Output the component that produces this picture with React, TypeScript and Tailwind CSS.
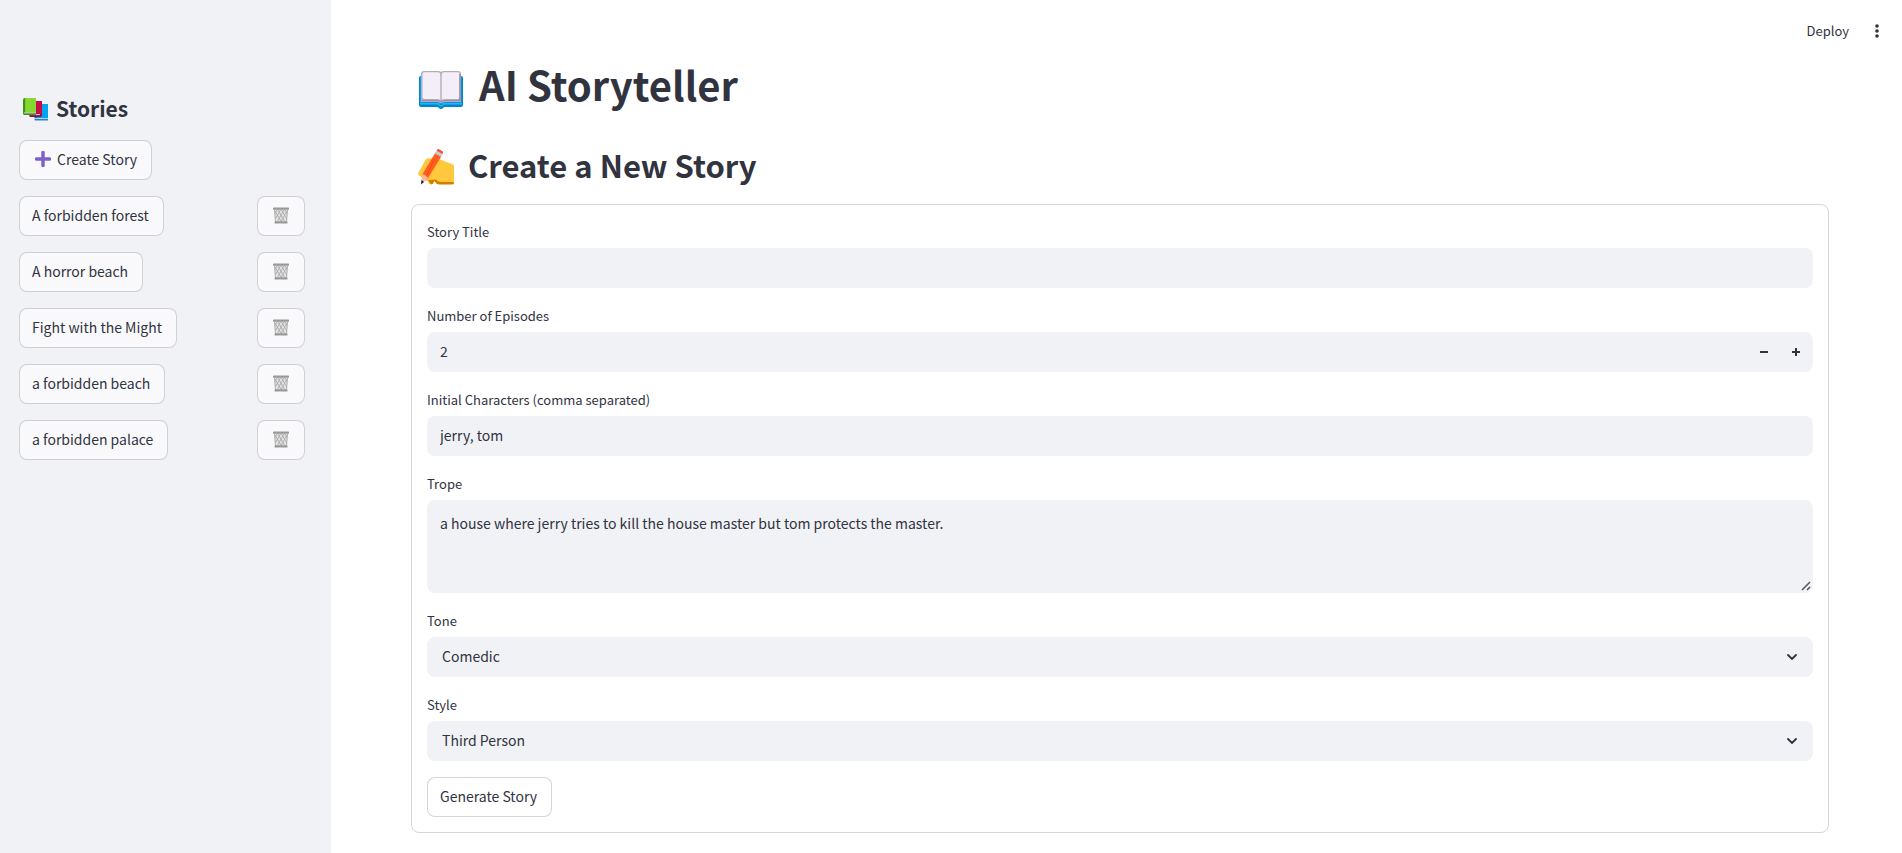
import { useState, type ReactNode } from "react";

const stories = [
  "A forbidden forest",
  "A horror beach",
  "Fight with the Might",
  "a forbidden beach",
  "a forbidden palace",
];

function StackedBooks() {
  return (
    <svg viewBox="0 0 25 23" className="h-[23px] w-[25px] shrink-0" aria-hidden="true">
      <path d="M11.500 20.500V7.500q0-1.500 1.500-1.500H25v15H13z" fill="#0074ba" />
      <path d="M14 6h11v14H14z" fill="#00a6ed" />
      <path d="M12 20h13v1.500H12.500z" fill="#b4d6ef" />
      <path d="M11.500 21h13.500v1.500H12.500q-1 0-1-1.500z" fill="#1b87cf" />
      <path d="M6 17V4.500Q6 3 7.500 3H19v15H7z" fill="#990838" />
      <path d="M8 3h11v13.500H8z" fill="#ca0b4a" />
      <path d="M6.500 16H17v1.300H6.500z" fill="#e2c3d0" />
      <path d="M6 17.500h12V19H7z" fill="#990838" />
      <path d="M0 15.500V2Q0 0 2 0H13v16.500H1z" fill="#44911b" />
      <path d="M2.200 0H13v14H2.200z" fill="#86d72f" />
      <path d="M1.200 14.300H13v1.300H1.200z" fill="#d6e8cb" />
      <path d="M0 15.500h13v1.400H1.500Q0 16.900 0 15.500z" fill="#44911b" />
    </svg>
  );
}

function OpenBook() {
  return (
    <svg viewBox="0 0 44 38" className="h-[38px] w-[44px] shrink-0" aria-hidden="true">
      <path d="M2 5h40q2 0 2 2v27q0 2-2 2H25q-1 2-3 2t-3-2H2q-2 0-2-2V7q0-2 2-2z" fill="#0084ce" />
      <path d="M1 5.500h2v26h38v-26h1.500V33H1z" fill="#00a6ed" />
      <path d="M1 32h18.500q1 2 2.500 2t2.500-2H43v1.500H25q-1 2-3 2t-3-2H1z" fill="#26b4f0" />
      <path d="M5 0h14q2 0 3 1 1-1 3-1h14q3 0 3 3v28H25q-1 1-3 1t-3-1H2V3q0-3 3-3z" fill="#b4acbc" />
      <path d="M5 1.300h14q2.300 0 2.300 2.200V29Q20 28 18 28H5.500Q3.500 28 3.500 26V3q0-1.700 1.500-1.700z" fill="#f3eef8" />
      <path d="M25 1.300h14q1.500 0 1.500 1.700v23q0 2-2 2H26q-2 0-3.300 1V3.500q0-2.200 2.300-2.200z" fill="#f3eef8" />
      <path d="M3 29.500h15.500q2 0 3.500 1.200 1.500-1.200 3.500-1.200H41" stroke="#998ea4" strokeWidth="1" fill="none" />
      <path d="M41 3v27" stroke="#998ea4" strokeWidth="1.500" />
    </svg>
  );
}

function WritingHand() {
  return (
    <svg viewBox="0 0 36 36" className="h-9 w-9 shrink-0" aria-hidden="true">
      <path d="M8 10Q10 9 13 9.500h7l15 6q1 .5 1 2V33q0 2-2 2H21q-2 0-3-1.500L16 31l-3 4h-2l-1-3-3-1L2 27q-2-1-2-2.500z" fill="#ffc83d" />
      <path d="M10 31l3 4.500q2 0 3.500-3.500l2 2.500q1 1 3 1h13q1.500 0 1.500-2.500H23q-3 0-5-2.500z" fill="#d67d00" />
      <path d="M4.500 25L17.500 3.500 23.500 7 9.500 30 5 33z" fill="#ff5d22" />
      <path d="M16 10L8 29" stroke="#f04c12" strokeWidth="1" />
      <path d="M18.300 2.200l1.200-2q.6-.5 1.500 0l3.500 2q1 .6.500 1.500l-1 2z" fill="#f8503a" />
      <path d="M18.700 1.800l5.800 3.200-1.700 2.800L17 4.600z" fill="#c5cad2" />
      <path d="M4.500 25q3 .5 5.500 4l-5.500 5-1.500 1z" fill="#ffb49a" />
      <path d="M3.500 31l2.500 2-3 2.500z" fill="#212121" />
    </svg>
  );
}

function PlusMark() {
  return (
    <svg viewBox="0 0 16 16" className="h-4 w-4 shrink-0" aria-hidden="true">
      <path d="M8 1.500v13M1.500 8h13" stroke="#7d5fcb" strokeWidth="3.400" strokeLinecap="round" />
    </svg>
  );
}

function Wastebasket() {
  return (
    <svg viewBox="0 0 16 17" className="h-[17px] w-4" aria-hidden="true">
      <path d="M1 2h14l-1 13.500H2z" fill="#e2e2e2" />
      <path
        d="M1.500 3l1 11.500M14.500 3l-1 11.500M2 4l6 10.500M5 3l6.500 11.500M8.500 3l5 8.500M12 3l2 3.500M14 4L8 14.500M11 3L4.500 14.500M7.500 3l-5 8.500M4 3L2 6.500"
        stroke="#acacac"
        strokeWidth=".9"
      />
      <rect x="0" y="0.500" width="16" height="2.300" rx=".6" fill="#999999" />
      <rect x="1.500" y="14.200" width="13" height="2.300" rx=".6" fill="#999999" />
    </svg>
  );
}

function Chevron() {
  return (
    <svg viewBox="0 0 10 6" className="pointer-events-none absolute top-[17px] right-4 h-1.5 w-2.5" aria-hidden="true">
      <path d="M1 1l4 4 4-4" fill="none" stroke="#31333f" strokeWidth="1.800" strokeLinecap="round" />
    </svg>
  );
}

const control = "block w-full rounded-lg bg-[#f0f2f6] text-[14px] outline-none";
const button = "flex h-10 items-center rounded-lg border border-[#31333f]/20 pb-0.5 text-[14px]";

function Field({ id, label, children }: { id: string; label: string; children: ReactNode }) {
  return (
    <div>
      <label htmlFor={id} className="mb-1 block text-[13px] leading-6">
        {label}
      </label>
      {children}
    </div>
  );
}

function SelectField({ id, label, options }: { id: string; label: string; options: string[] }) {
  return (
    <Field id={id} label={label}>
      <div className="relative">
        <select id={id} className={`${control} h-10 appearance-none pr-10 pb-0.5 pl-[15px]`}>
          {options.map((option) => (
            <option key={option}>{option}</option>
          ))}
        </select>
        <Chevron />
      </div>
    </Field>
  );
}

export default function App() {
  const [episodes, setEpisodes] = useState(2);

  return (
    <div className="flex min-h-screen bg-white font-['Noto_Sans_CJK_SC',sans-serif] text-[#31333f]">
      <aside className="w-[331px] shrink-0 bg-[#f0f2f6] pt-[94px] pr-[26px] pl-[19px]">
        <h3 className="flex h-[30px] items-center gap-2 pl-1 text-[21px] leading-[26px] font-semibold">
          <StackedBooks />
          <span className="pb-0.5">Stories</span>
        </h3>
        <button type="button" className={`${button} mt-4 gap-1.5 bg-[#f9f9fb] pr-3.5 pl-[15px]`}>
          <PlusMark />
          Create Story
        </button>
        <ul className="mt-4 flex flex-col gap-4">
          {stories.map((story) => (
            <li key={story} className="flex justify-between">
              <button type="button" className={`${button} bg-[#f9f9fb] pr-3.5 pl-3`}>
                {story}
              </button>
              <button
                type="button"
                aria-label={`Delete ${story}`}
                className={`${button} w-12 justify-center bg-[#f9f9fb]`}
              >
                <Wastebasket />
              </button>
            </li>
          ))}
        </ul>
      </aside>

      <main className="min-w-0 flex-1">
        <header className="flex h-[60px] items-center justify-end gap-[18px] pt-0.5 pr-[15px]">
          <button type="button" className="text-[13px]">
            Deploy
          </button>
          <button type="button" aria-label="Main menu" className="flex h-6 w-5 items-center justify-center">
            <svg viewBox="0 0 4 14" className="h-3.5 w-1" fill="#31333f" aria-hidden="true">
              <circle cx="2" cy="2" r="1.800" />
              <circle cx="2" cy="7" r="1.800" />
              <circle cx="2" cy="12" r="1.800" />
            </svg>
          </button>
        </header>

        <div className="pr-[73px] pb-4 pl-20">
          <h1 className="flex h-[60px] items-center gap-4 pl-2 text-[40px] leading-[48px] font-bold">
            <OpenBook />
            <span className="pb-3">AI Storyteller</span>
          </h1>
          <h2 className="mt-[18px] flex h-[58px] items-center gap-3.5 pl-[7px] text-[31px] leading-[50px] font-semibold">
            <WritingHand />
            <span className="pb-1">Create a New Story</span>
          </h2>
          <form
            className="mt-2 flex flex-col gap-4 rounded-lg border border-[#31333f]/20 p-[15px]"
            onSubmit={(event) => event.preventDefault()}
          >
            <Field id="title" label="Story Title">
              <input id="title" type="text" className={`${control} h-10 px-[13px] pb-0.5`} />
            </Field>
            <Field id="episodes" label="Number of Episodes">
              <div className="flex h-10 overflow-hidden rounded-lg bg-[#f0f2f6] pr-px">
                <input
                  id="episodes"
                  type="text"
                  inputMode="numeric"
                  value={episodes}
                  onChange={(event) => setEpisodes(Number(event.target.value) || 1)}
                  className="min-w-0 flex-1 px-[13px] pb-0.5 text-[14px] outline-none"
                />
                <button
                  type="button"
                  aria-label="Decrease episodes"
                  className="flex w-8 items-center justify-center"
                  onClick={() => setEpisodes(Math.max(1, episodes - 1))}
                >
                  <svg viewBox="0 0 8 8" className="h-2 w-2" aria-hidden="true">
                    <path d="M0 3h8v2H0z" fill="#31333f" />
                  </svg>
                </button>
                <button
                  type="button"
                  aria-label="Increase episodes"
                  className="flex w-8 items-center justify-center"
                  onClick={() => setEpisodes(episodes + 1)}
                >
                  <svg viewBox="0 0 8 8" className="h-2 w-2" aria-hidden="true">
                    <path d="M3 0h2v3h3v2H5v3H3V5H0V3h3z" fill="#31333f" />
                  </svg>
                </button>
              </div>
            </Field>
            <Field id="characters" label="Initial Characters (comma separated)">
              <input
                id="characters"
                type="text"
                defaultValue="jerry, tom"
                className={`${control} h-10 px-[13px] pb-0.5`}
              />
            </Field>
            <Field id="trope" label="Trope">
              <div className="relative">
                <textarea
                  id="trope"
                  defaultValue="a house where jerry tries to kill the house master but tom protects the master."
                  className={`${control} h-[93px] resize-y px-[13px] py-3 leading-[22px] [&::-webkit-resizer]:hidden`}
                />
                <svg
                  viewBox="0 0 10 10"
                  className="pointer-events-none absolute right-0.5 bottom-0.5 h-2.5 w-2.5"
                  aria-hidden="true"
                >
                  <path d="M1 9l8-8M6 9l3-3" stroke="#505157" strokeWidth="1.500" />
                </svg>
              </div>
            </Field>
            <SelectField id="tone" label="Tone" options={["Comedic", "Dark", "Dramatic"]} />
            <SelectField id="style" label="Style" options={["Third Person", "First Person"]} />
            <button type="submit" className={`${button} self-start bg-white pr-3.5 pl-3`}>
              Generate Story
            </button>
          </form>
        </div>
      </main>
    </div>
  );
}
